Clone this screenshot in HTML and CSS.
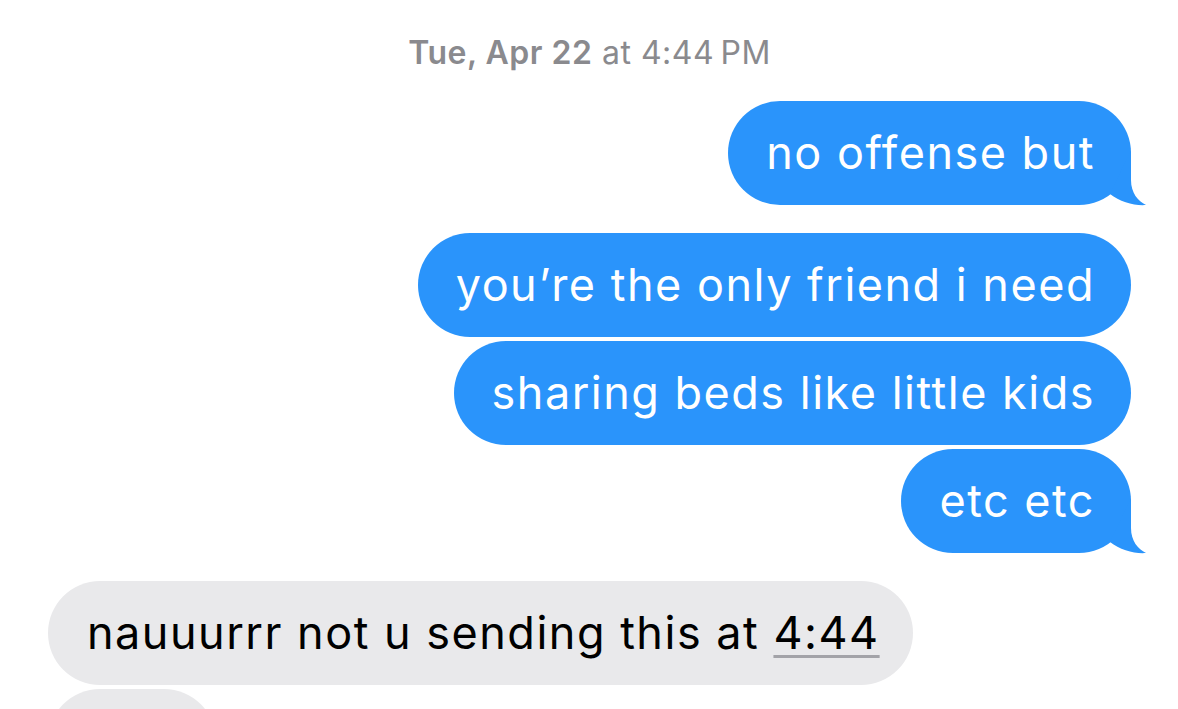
FILE: index.html
```html
<!doctype html>
<html>
    <head>
        <title>Messages</title>
        <meta name="viewport" content="width=device-width, initial-scale=1.0" />
        <link rel="stylesheet" href="styles.css">
    </head>
    <body>
        <div class="thread">
            <div class="stamp"><b>Tue, Apr 22</b> at 4:44&#8201;PM</div>

            <div class="group sent">
                <div class="bubble tailed">no offense but
                    <svg class="tail" width="48" height="58" viewBox="0 0 48 58"><path d="M31 2 L31 32 C31 45 38 53 46 57 C35 58 20 54 10 46 Z"/></svg>
                </div>
            </div>

            <div class="group sent">
                <div class="bubble">you’re the only friend i need</div>
                <div class="bubble">sharing beds like little kids</div>
                <div class="bubble tailed">etc etc
                    <svg class="tail" width="48" height="58" viewBox="0 0 48 58"><path d="M31 2 L31 32 C31 45 38 53 46 57 C35 58 20 54 10 46 Z"/></svg>
                </div>
            </div>

            <div class="group received">
                <div class="bubble">nauuurrr not u sending this at <span class="datelink">4:44</span></div>
                <div class="bubble stub">&nbsp;</div>
            </div>
        </div>
    </body>
</html>
```

FILE: styles.css
```css
body {
    margin: 0;
    background-color: #fff;
    font-family: Inter, "Noto Sans", sans-serif;
    overflow: hidden;
}
.thread {
    padding: 0 47px 0 48px;
    height: 709px;
    overflow: hidden;
}
.stamp {
    text-align: center;
    color: #8a8a8e;
    font-size: 32px;
    letter-spacing: 0.5px;
    line-height: 36px;
    padding-top: 35px;
    margin-bottom: 30px;
}
.stamp b {
    font-weight: 600;
}
.group {
    display: flex;
    flex-direction: column;
    gap: 4px;
    margin-bottom: 28px;
}
.sent {
    align-items: flex-end;
}
.received {
    align-items: flex-start;
}
.bubble {
    position: relative;
    font-size: 45px;
    letter-spacing: 1.5px;
    line-height: 52px;
    padding: 26px 36px 26px 38px;
    border-radius: 52px;
    white-space: nowrap;
}
.sent .bubble {
    background-color: #2a94fb;
    color: #fff;
}
.received .bubble {
    background-color: #e9e9eb;
    color: #000;
    padding: 26px 33px 26px 39px;
}
.tail {
    position: absolute;
    right: -17px;
    bottom: -1px;
    fill: #2a94fb;
}
.datelink {
    text-decoration: underline;
    text-decoration-color: #a3a3a8;
    text-decoration-thickness: 3px;
    text-underline-offset: 6px;
}
.received .stub {
    width: 168px;
    padding: 26px 0;
}
```
